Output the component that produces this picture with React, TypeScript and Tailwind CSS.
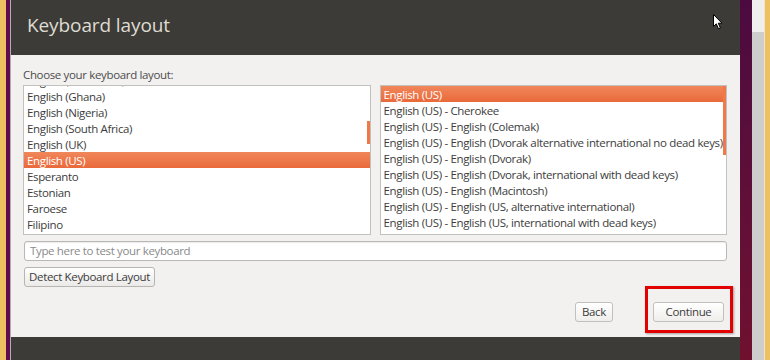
const leftItems = [
  "English (Cameroon)",
  "English (Ghana)",
  "English (Nigeria)",
  "English (South Africa)",
  "English (UK)",
  "English (US)",
  "Esperanto",
  "Estonian",
  "Faroese",
  "Filipino",
  "Finnish",
];

const rightItems = [
  "English (US)",
  "English (US) - Cherokee",
  "English (US) - English (Colemak)",
  "English (US) - English (Dvorak alternative international no dead keys)",
  "English (US) - English (Dvorak)",
  "English (US) - English (Dvorak, international with dead keys)",
  "English (US) - English (Macintosh)",
  "English (US) - English (US, alternative international)",
  "English (US) - English (US, international with dead keys)",
  "English (US) - English (US, with euro on 5)",
];

const Row = ({ label, selected }: { label: string; selected?: boolean }) => (
  <div
    className={
      selected
        ? "h-[16px] leading-[18px] px-[3px] whitespace-nowrap bg-gradient-to-b from-[#f0875a] to-[#e9693a] text-white"
        : "h-[16px] leading-[18px] px-[3px] whitespace-nowrap text-[#3c3c3c]"
    }
  >
    {label}
  </div>
);

const Cursor = () => (
  <svg className="absolute left-[713px] top-[14px]" width="11" height="16" viewBox="0 0 11 16">
    <path d="M0.5 0.5 L0.5 12.5 L3.3 9.8 L5.5 14.8 L7.4 14 L5.3 9.2 L9 9.2 Z" fill="#fff" stroke="#000" strokeWidth="1" strokeLinejoin="round" />
  </svg>
);

export default function App() {
  return (
    <div className="relative w-[770px] h-[360px] flex overflow-hidden font-['Open_Sans','Noto_Sans',sans-serif] text-[11.5px] tracking-[-0.35px]">
      {/* desktop edge, left */}
      <div className="w-[6px] bg-[#edc161]" />
      <div className="w-[4px] bg-[#5e0c4e]" />
      <div className="w-px bg-[#b9a9b5]" />

      {/* installer window */}
      <div className="w-[729px] flex flex-col">
        <div className="h-[55px] bg-[#3c3b37] pl-[16px] pt-[12px]">
          <h1 className="text-[19px] leading-[26px] tracking-[-0.1px] text-[#dfdbd2]">Keyboard layout</h1>
        </div>

        <div className="h-[282px] bg-[#f2f1f0] flex flex-col pl-[12px] pr-[13px] pt-[12px]">
          <div className="h-[16px] leading-[16px] text-[#4c4c4c]">Choose your keyboard layout:</div>

          <div className="mt-[2px] grid grid-cols-2 gap-[9px]">
            <div className="relative h-[150px] bg-white border border-[#c3c1bd] overflow-hidden">
              <div className="-mt-[14px]">
                {leftItems.map((item) => (
                  <Row key={item} label={item} selected={item === "English (US)"} />
                ))}
              </div>
              <div className="absolute right-0 top-[35px] w-[3px] h-[23px] bg-[#ef7a48]" />
            </div>
            <div className="relative h-[150px] bg-white border border-[#c3c1bd] overflow-hidden">
              {rightItems.map((item, i) => (
                <Row key={item} label={item} selected={i === 0} />
              ))}
              <div className="absolute right-0 top-0 w-[3px] h-[69px] bg-[#ef7a48]" />
            </div>
          </div>

          <div className="mt-[6px] h-[20px] ml-px bg-white border border-[#bab8b4] rounded-[3px] shadow-[inset_0_1px_1px_rgba(0,0,0,0.08)] pl-[5px] leading-[18px] text-[#8a8a8a]">
            Type here to test your keyboard
          </div>

          <div className="mt-[6px] ml-px">
            <button className="w-[131px] h-[20px] border border-[#b7b5b1] rounded-[3px] bg-gradient-to-b from-white to-[#ebeae8] text-[#3c3c3c] leading-[18px]">
              Detect Keyboard Layout
            </button>
          </div>

          <div className="mt-[15px] flex justify-end pr-[3px] gap-[40px]">
            <button className="w-[38px] h-[20px] border border-[#c2c0bc] rounded-[3px] bg-gradient-to-b from-white to-[#efeeec] text-[#3c3c3c] leading-[18px]">
              Back
            </button>
            <button className="w-[71px] h-[20px] border border-[#c2c0bc] rounded-[3px] bg-gradient-to-b from-white to-[#efeeec] text-[#3c3c3c] leading-[18px]">
              Continue
            </button>
          </div>
        </div>

        <div className="flex-1 bg-[#3c3b37]" />
      </div>

      {/* desktop edge, right */}
      <div className="w-[12px] bg-gradient-to-b from-[#4c0a40] to-[#70102f]" />
      <div className="w-[12px] flex flex-col">
        <div className="h-[32px] bg-[#efefef]" />
        <div className="flex-1 bg-[#cdcdcd]" />
      </div>
      <div className="w-px bg-[#f5e6c2]" />
      <div className="w-[5px] bg-[#edc161]" />

      {/* highlight drawn over the screenshot */}
      <div className="absolute left-[645px] top-[286px] w-[88px] h-[47px] border-[3px] border-[#e30000] shadow-[1px_1px_2px_rgba(0,0,0,0.35)]" />
      <Cursor />
    </div>
  );
}
